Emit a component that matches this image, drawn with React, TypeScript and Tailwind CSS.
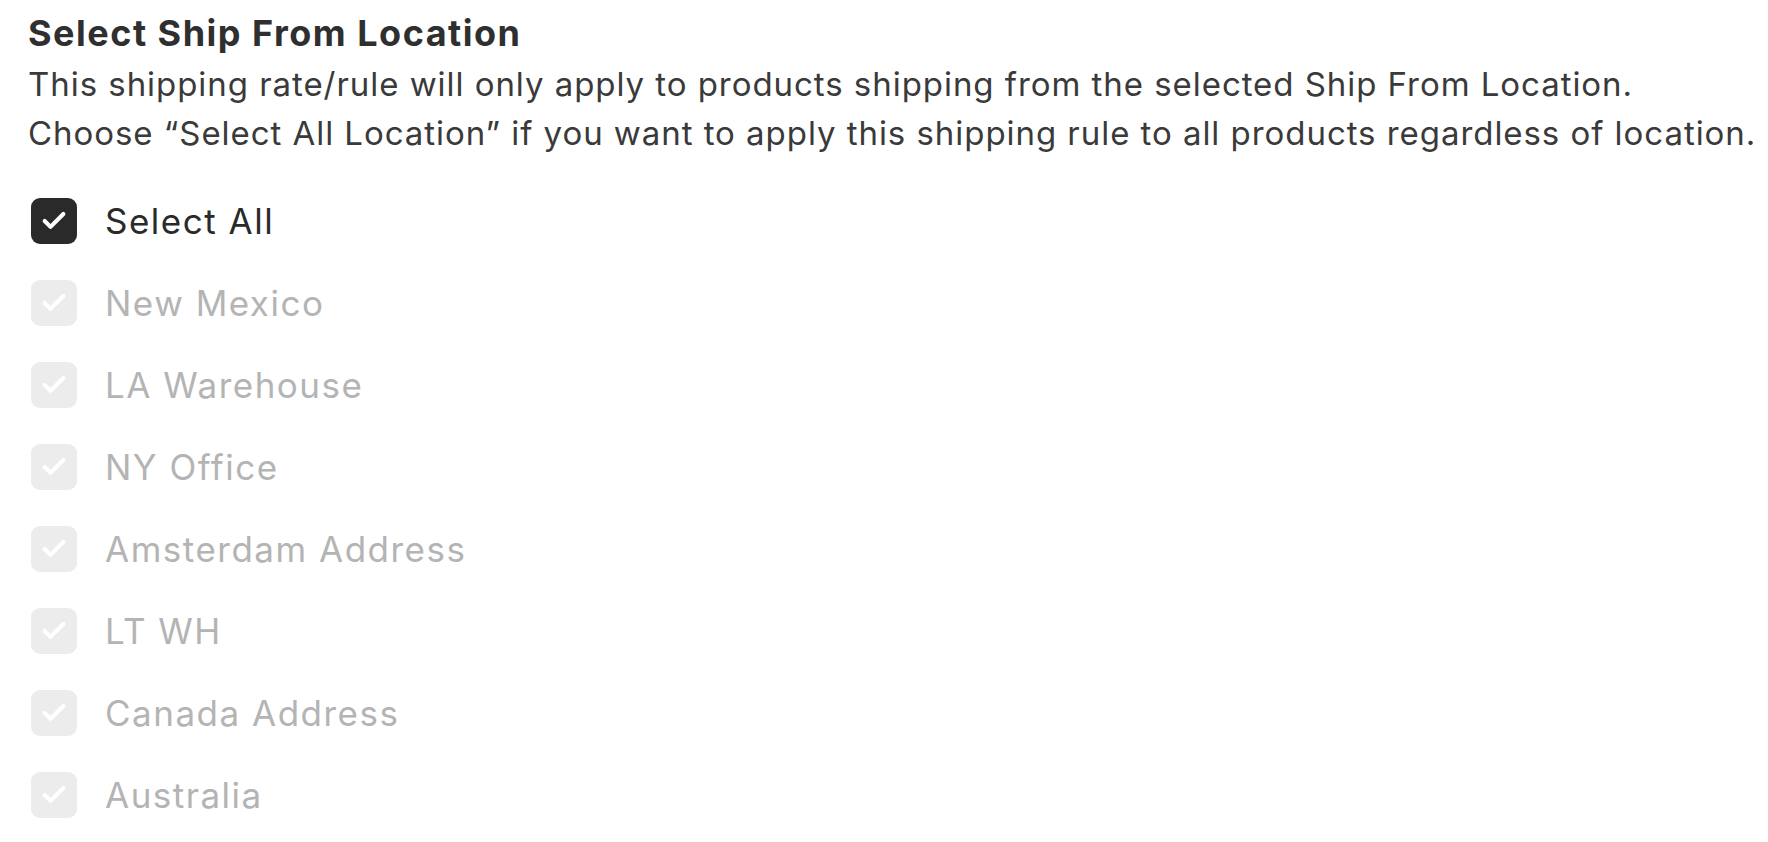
import { Check } from 'lucide-react';

const locations = [
  'New Mexico',
  'LA Warehouse',
  'NY Office',
  'Amsterdam Address',
  'LT WH',
  'Canada Address',
  'Australia',
];

function CheckRow({ label, disabled }: { label: string; disabled?: boolean }) {
  return (
    <label className="flex items-center gap-[28px] h-[46px]">
      <span
        className={
          disabled
            ? 'flex items-center justify-center w-[46px] h-[46px] rounded-[9px] bg-[#ececec]'
            : 'flex items-center justify-center w-[46px] h-[46px] rounded-[9px] bg-[#2a2a2a]'
        }
      >
        <Check className="w-[28px] h-[28px] text-white" strokeWidth={3.5} />
      </span>
      <span
        className={
          disabled
            ? 'text-[35px] leading-[46px] tracking-[1.5px] text-[#b4b4b4]'
            : 'text-[35px] leading-[46px] tracking-[1.5px] text-[#2a2a2a]'
        }
      >
        {label}
      </span>
    </label>
  );
}

export default function App() {
  return (
    <div className="min-h-screen bg-white pl-[28px] pt-[11px] font-['Inter',sans-serif]">
      <h2 className="text-[36px] leading-[44px] font-bold text-[#2f2f2f] tracking-[1.5px]">
        Select Ship From Location
      </h2>
      <p className="mt-[5px] text-[33px] leading-[49px] tracking-[0.95px] text-[#3a3a3a]">
        This shipping rate/rule will only apply to products shipping from the selected Ship From Location.
        <br />
        Choose “Select All Location” if you want to apply this shipping rule to all products regardless of location.
      </p>

      <div className="mt-[40px] ml-[3px] flex flex-col gap-[36px]">
        <CheckRow label="Select All" />
        {locations.map((loc) => (
          <CheckRow key={loc} label={loc} disabled />
        ))}
      </div>
    </div>
  );
}
